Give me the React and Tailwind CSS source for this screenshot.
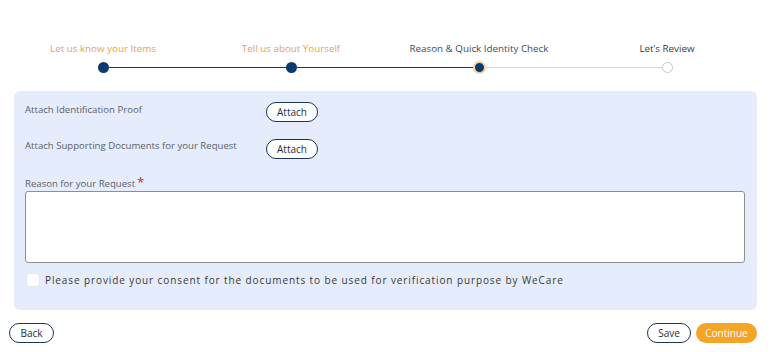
import React from "react";

const steps = [
  { label: "Let us know your Items", state: "done" },
  { label: "Tell us about Yourself", state: "done" },
  { label: "Reason & Quick Identity Check", state: "active" },
  { label: "Let’s Review", state: "todo" },
];

function Step({ label, state, left, right }) {
  const labelColor =
    state === "done" ? "text-[#e9a24f]" : state === "active" ? "text-[#3d4b63]" : "text-[#3a3a3a]";
  return (
    <div className="w-[188px] flex flex-col items-center">
      <div className={"text-[9.8px] leading-[12px] whitespace-nowrap " + labelColor}>{label}</div>
      <div className="mt-[6px] w-full h-[12px] flex items-center">
        <div className={"flex-1 h-px " + (left || "bg-transparent")} />
        {state === "done" && <div className="w-[11px] h-[11px] rounded-full bg-[#0b3a70]" />}
        {state === "active" && (
          <div className="w-[13px] h-[13px] rounded-full bg-[#0b3a70] border-2 border-[#f4d29a]" />
        )}
        {state === "todo" && (
          <div className="w-[11px] h-[11px] rounded-full bg-white border border-[#c8c8c8]" />
        )}
        <div className={"flex-1 h-px " + (right || "bg-transparent")} />
      </div>
    </div>
  );
}

function PillButton({ children, className = "" }) {
  return (
    <button
      type="button"
      className={
        "h-[20px] rounded-full border border-[#1d3557] bg-white text-[10px] text-[#1f2d3d] leading-none " +
        className
      }
    >
      {children}
    </button>
  );
}

export default function App() {
  const navy = "bg-[#12385f]";
  const gray = "bg-[#d6d6d6]";
  return (
    <div className="w-[771px] h-[352px] bg-white" style={{ fontFamily: "'Open Sans', 'Noto Sans', sans-serif" }}>
      {/* stepper */}
      <div className="pt-[43px] pl-[9px] flex">
        <Step {...steps[0]} right={navy} />
        <Step {...steps[1]} left={navy} right={navy} />
        <Step {...steps[2]} left={navy} right={gray} />
        <Step {...steps[3]} left={gray} />
      </div>

      {/* form panel */}
      <div className="mt-[18px] mx-[14px] h-[219px] rounded-md bg-[#e5ecfb] pl-[11px] pr-[12px] pt-[11px]">
        <div className="flex">
          <div className="w-[241px] pt-[2px] text-[9.6px] leading-[12px] text-[#5d616b]">Attach Identification Proof</div>
          <PillButton className="w-[52px]">Attach</PillButton>
        </div>
        <div className="flex mt-[17px]">
          <div className="w-[241px] pt-[1px] text-[9.6px] leading-[12px] text-[#5d616b]">
            Attach Supporting Documents for your Request
          </div>
          <PillButton className="w-[52px]">Attach</PillButton>
        </div>
        <div className="mt-[18px] text-[9.6px] leading-[12px] text-[#5d616b]">
          Reason for your Request<span className="text-[#c0282d] text-[13px] leading-[10px] ml-[2px]">*</span>
        </div>
        <textarea className="mt-[1px] block w-[720px] h-[72px] bg-white border border-[#8f8f8f] rounded-[3px] resize-none outline-none" />
        <label className="mt-[10px] flex items-center">
          <span className="w-[14px] h-[14px] ml-[1px] rounded-[3px] bg-white border border-[#e6e6e6]" />
          <span className="ml-[5px] text-[10px] leading-[12px] text-[#3a3a3a] tracking-[0.9px]">
            Please provide your consent for the documents to be used for verification purpose by WeCare
          </span>
        </label>
      </div>

      {/* footer */}
      <div className="mt-[13px] pl-[9px] pr-[14px] flex items-center">
        <PillButton className="w-[45px]">Back</PillButton>
        <div className="flex-1" />
        <PillButton className="w-[44px]">Save</PillButton>
        <button
          type="button"
          className="ml-[5px] w-[61px] h-[20px] rounded-full bg-[#f4a426] text-white text-[10px] leading-none"
        >
          Continue
        </button>
      </div>
    </div>
  );
}
